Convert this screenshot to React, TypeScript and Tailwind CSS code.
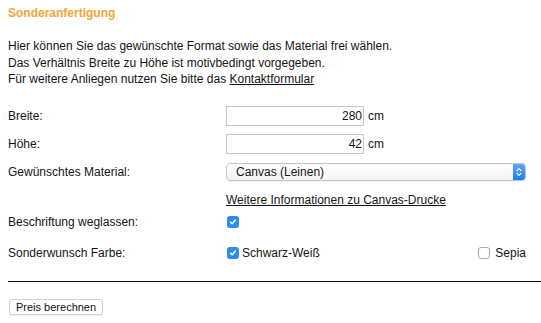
import React from "react";

function Check({ checked }: { checked: boolean }) {
  if (checked) {
    return (
      <span className="inline-flex w-[12px] h-[12px] rounded-[3px] bg-[#2a8cf3] items-center justify-center shrink-0">
        <svg width="8" height="8" viewBox="0 0 8 8">
          <path d="M1.6 4.2 L3.2 5.8 L6.4 2" fill="none" stroke="#fff" strokeWidth="1.5" strokeLinecap="round" strokeLinejoin="round" />
        </svg>
      </span>
    );
  }
  return <span className="inline-block w-[12px] h-[12px] rounded-[3px] border border-[#a9a9a9] bg-white shrink-0" />;
}

export default function App() {
  return (
    <div className="w-[541px] h-[323px] bg-white text-[12px] text-[#151515] font-['Liberation_Sans',Arial,sans-serif] overflow-hidden">
      <div className="pl-[8px] pt-[6px]">
        <h2 className="font-bold text-[12px] leading-[14px] text-[#f5a434]">Sonderanfertigung</h2>
        <div className="mt-[18px] leading-[16.5px]">
          <p>Hier können Sie das gewünschte Format sowie das Material frei wählen.</p>
          <p>Das Verhältnis Breite zu Höhe ist motivbedingt vorgegeben.</p>
          <p>
            Für weitere Anliegen nutzen Sie bitte das <span className="underline">Kontaktformular</span>
          </p>
        </div>
      </div>

      <div className="mt-[14px] pl-[8px] flex flex-col">
        <div className="h-[28px] flex items-center">
          <div className="w-[218px]">Breite:</div>
          <div className="flex items-center">
            <div className="w-[138px] h-[20px] border border-[#c6c6c6] flex items-center justify-end pr-[1px] text-[12px]">280</div>
            <span className="ml-[4px]">cm</span>
          </div>
        </div>
        <div className="h-[28px] flex items-center">
          <div className="w-[218px]">Höhe:</div>
          <div className="flex items-center">
            <div className="w-[138px] h-[20px] border border-[#c6c6c6] flex items-center justify-end pr-[1px] text-[12px]">42</div>
            <span className="ml-[4px]">cm</span>
          </div>
        </div>
        <div className="h-[28px] flex items-center">
          <div className="w-[218px]">Gewünschtes Material:</div>
          <div className="w-[300px] h-[18px] rounded-[4px] border border-[#c4c4c4] bg-gradient-to-b from-white to-[#f3f3f3] flex items-center justify-between shadow-[0_1px_0_rgba(0,0,0,0.04)]">
            <span className="pl-[9px] leading-[16px]">Canvas (Leinen)</span>
            <span className="w-[12px] h-[16px] mr-0 rounded-r-[3px] bg-gradient-to-b from-[#5aa5f7] to-[#1f7ef0] flex items-center justify-center">
              <svg width="8" height="12" viewBox="0 0 8 12">
                <path d="M2 4.6 L4 2.6 L6 4.6 M2 7.4 L4 9.4 L6 7.4" fill="none" stroke="#fff" strokeWidth="1.2" strokeLinecap="round" strokeLinejoin="round" />
              </svg>
            </span>
          </div>
        </div>
        <div className="h-[28px] flex items-center">
          <div className="w-[218px]"></div>
          <span className="underline">Weitere Informationen zu Canvas-Drucke</span>
        </div>
        <div className="h-[16px] flex items-center">
          <div className="w-[218px]">Beschriftung weglassen:</div>
          <div className="pl-[1px] flex items-center">
            <Check checked />
          </div>
        </div>
        <div className="mt-[16px] h-[14px] flex items-center">
          <div className="w-[218px]">Sonderwunsch Farbe:</div>
          <div className="w-[300px] pl-[1px] flex items-center justify-between">
            <span className="flex items-center gap-[3px]">
              <Check checked />
              <span>Schwarz-Weiß</span>
            </span>
            <span className="flex items-center gap-[5px]">
              <Check checked={false} />
              <span>Sepia</span>
            </span>
          </div>
        </div>
        <div className="mt-[21px] h-[1px] bg-[#111]" />
        <div className="mt-[16px]">
          <button className="ml-[1px] h-[16px] px-[6px] rounded-[3px] border border-[#cfcfcf] bg-white text-[11px] leading-[14px] text-[#111] shadow-[0_1px_0_rgba(0,0,0,0.06)]">
            Preis berechnen
          </button>
        </div>
      </div>
    </div>
  );
}
